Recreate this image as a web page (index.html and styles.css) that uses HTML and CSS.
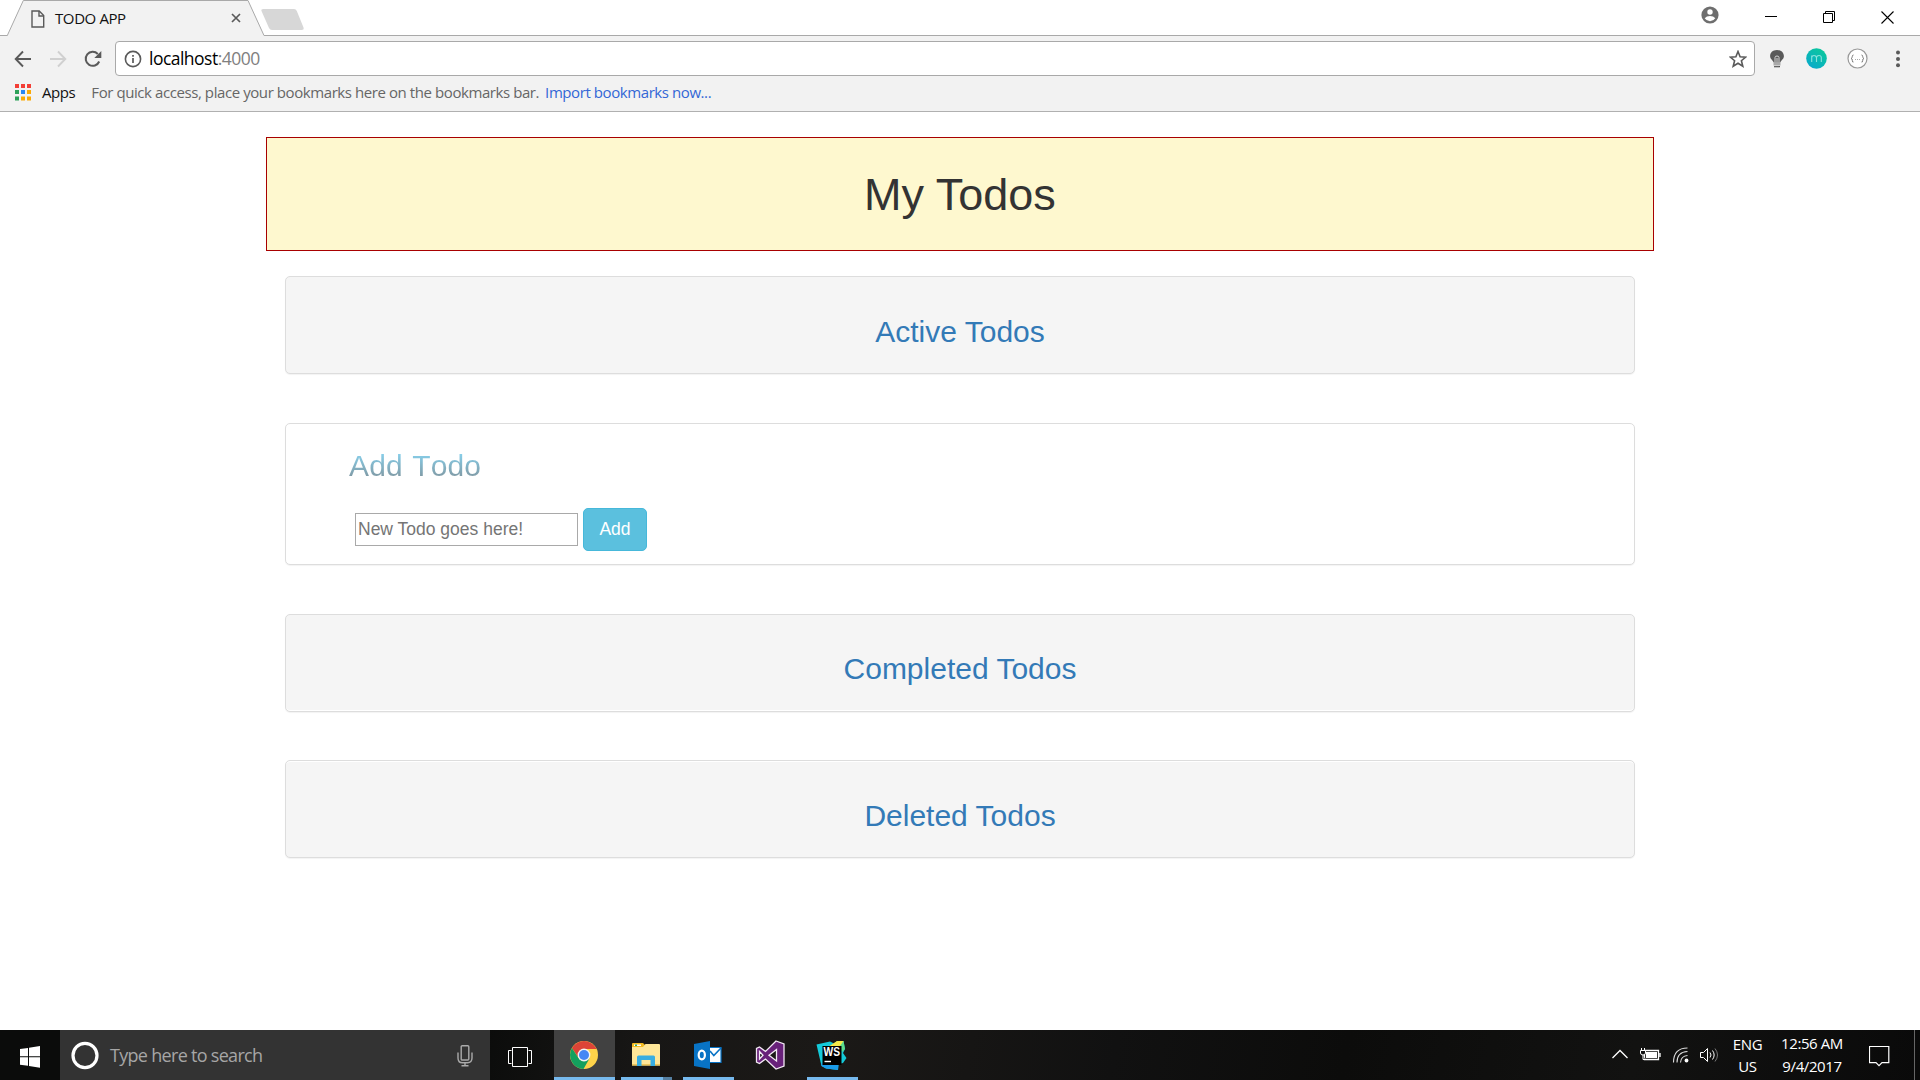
FILE: index.html
```html
<!DOCTYPE html>
<html lang="en">
<head>
<meta charset="utf-8">
<title>TODO APP</title>
<link rel="stylesheet" href="styles.css">
</head>
<body>
<header class="browser">
  <div class="titlebar">
    <div class="tab">
      <svg class="tab-shape" width="306" height="36" viewBox="0 0 306 36"><path d="M7 36L23.300 .5H248L264.500 36z" fill="#f2f2f2"/><path d="M0 35.500H7.300L23.300 .5H248L264 35.500H306" fill="none" stroke="#a9a9a9"/><path d="M263.500 9H294q2 0 2.800 2L303.500 27.500q.8 2.500-2 2.500H272q-2 0-3-2L261.500 11q-.8-2 2-2z" fill="#d7d7d7"/></svg>
      <svg class="tab-page" width="14" height="18" viewBox="0 0 14 18" fill="none" stroke="#5a5a5a" stroke-width="1.400"><path d="M1 1H8.200L12.700 5.600V17H1z"/><path d="M8 1V6H12.700"/></svg>
      <span class="tab-title">TODO APP</span>
      <svg class="tab-close" width="10" height="10" viewBox="0 0 10 10" stroke="#5a5a5a" stroke-width="1.700"><path d="M1 1L9 9M9 1L1 9"/></svg>
    </div>
    <div class="window-controls">
      <svg class="profile" width="18" height="18" viewBox="0 0 18 18"><circle cx="9" cy="9" r="8.600" fill="#6e6e6e"/><circle cx="9" cy="6" r="2.700" fill="#fff"/><path d="M3.700 12.300Q5.500 9.900 9 9.900T14.300 12.300Q12.500 15.200 9 15.200T3.700 12.300z" fill="#fff"/></svg>
      <svg width="12" height="12" viewBox="0 0 12 12" stroke="#000"><path d="M0 5.500H12"/></svg>
      <svg width="12" height="12" viewBox="0 0 12 12" fill="none" stroke="#000"><path d="M.5 2.500H9.500V11.500H.5zM2.500 2.500V.5H11.500V9.500H9.500"/></svg>
      <svg width="13" height="13" viewBox="0 0 13 13" stroke="#000" stroke-width="1.100"><path d="M.5 .5L12.500 12.500M12.500 .5L.5 12.500"/></svg>
    </div>
  </div>
  <div class="toolbar">
    <div class="nav">
      <svg width="18" height="18" viewBox="0 0 18 18" fill="none" stroke="#5a5a5a" stroke-width="1.900"><path d="M17 9H2M9 1.500L1.700 9L9 16.500"/></svg>
      <svg width="18" height="18" viewBox="0 0 18 18" fill="none" stroke="#d0d0d0" stroke-width="1.900"><path d="M1 9H16M9 1.500L16.300 9L9 16.500"/></svg>
      <svg width="18" height="18" viewBox="0 0 18 18"><path d="M15.200 11.500A7 7 0 1 1 13.800 4" fill="none" stroke="#5a5a5a" stroke-width="2"/><path d="M17.300 1V8H10.300z" fill="#5a5a5a"/></svg>
    </div>
    <div class="omnibox">
      <svg width="18" height="18" viewBox="0 0 18 18"><circle cx="9" cy="9" r="7.600" fill="none" stroke="#5a5a5a" stroke-width="1.600"/><path d="M9 8V13M9 5V6.800" stroke="#5a5a5a" stroke-width="1.700"/></svg>
      <span class="url">localhost<span class="port">:4000</span></span>
      <svg class="star" width="18" height="18" viewBox="0 0 18 18"><path d="M9 1.500L11.100 6.700L16.700 7.100L12.400 10.700L13.800 16.200L9 13.200L4.200 16.200L5.600 10.700L1.300 7.100L6.900 6.700z" fill="none" stroke="#5a5a5a" stroke-width="1.600"/></svg>
    </div>
    <div class="extensions">
      <svg width="16" height="20" viewBox="0 0 16 20"><path d="M8 1C3.500 1 1 4 1.100 7.300C1.200 10.500 4 11 4.500 13.500H11.500C12 11 14.800 10.500 14.900 7.300C15 4 12.500 1 8 1z" fill="#5a5a5a"/><path d="M6 13V8.500Q6 7 8 7T10 8.500V13M8 9V13" fill="none" stroke="#d8d8d8"/><path d="M4.500 14H11.500V16.500H4.500z" fill="#aaa"/><path d="M5 17.700H11" stroke="#555" stroke-width="1.200"/></svg>
      <svg class="ext-m" width="21" height="21" viewBox="0 0 21 21"><defs><linearGradient id="teal" x1="0" y1="1" x2=".7" y2="0"><stop offset="0" stop-color="#08a6d2"/><stop offset="1" stop-color="#0bc79d"/></linearGradient></defs><circle cx="10.500" cy="10.500" r="10.300" fill="url(#teal)"/><path d="M5.700 14V7.500M5.700 9.500Q6 7.500 8 7.500T10.500 9.500V14M10.500 9.500Q10.800 7.500 13 7.500T15.300 9.500V14" fill="none" stroke="#8ae4dc" stroke-width="1.100"/></svg>
      <svg width="21" height="21" viewBox="0 0 21 21"><circle cx="10.500" cy="10.500" r="9.500" fill="#fff" stroke="#999" stroke-width="1.200"/><path d="M6.500 7Q5.300 7 5.300 8.500T4.200 10.500Q5.300 10.500 5.300 12.500T6.500 14M14.500 7Q15.700 7 15.700 8.500T16.800 10.500Q15.700 10.500 15.700 12.500T14.500 14" fill="none" stroke="#777"/><path d="M8 11.500H13.500" stroke="#aaa" stroke-dasharray="1 1"/></svg>
      <svg class="menu" width="6" height="18" viewBox="0 0 6 18" fill="#5a5a5a"><circle cx="3" cy="2.500" r="2"/><circle cx="3" cy="9" r="2"/><circle cx="3" cy="15.200" r="2"/></svg>
    </div>
  </div>
  <div class="bookmarks">
    <svg width="17" height="17" viewBox="0 0 17 17"><path d="M0 0h4v4H0zM6 0h4v4H6zM12 0h4v4H12z" fill="#f33f36"/><path d="M0 6h4v4H0zM0 12.500h4v4H0z" fill="#2da159"/><path d="M6 6h4v4H6z" fill="#2986f2"/><path d="M12 6h4v4H12zM6 12.500h4v4H6zM12 12.500h4v4H12z" fill="#fba905"/></svg>
    <span class="apps">Apps</span>
    <span class="hint">For quick access, place your bookmarks here on the bookmarks bar.</span>
    <a class="import">Import bookmarks now...</a>
  </div>
</header>

<main class="page">
  <div class="page-header"><h1>My Todos</h1></div>
  <div class="panels">
    <section class="panel active"><h3>Active Todos</h3></section>
    <section class="panel add">
      <h3 class="fade">Add Todo</h3>
      <form class="add-form">
        <input class="field" type="text" placeholder="New Todo goes here!">
        <button class="add-btn" type="button">Add</button>
      </form>
    </section>
    <section class="panel completed"><h3>Completed Todos</h3></section>
    <section class="panel deleted"><h3>Deleted Todos</h3></section>
  </div>
</main>

<footer class="taskbar">
  <div class="start"><svg width="20" height="22" viewBox="0 0 20 22" fill="#fff"><path d="M0 3L8 1.900V10.300H0zM9 1.700L20 0V10.300H9zM0 11.300H8V19.800L0 18.700zM9 11.300H20V21.800L9 20z"/></svg></div>
  <div class="search">
    <svg width="28" height="30" viewBox="0 0 28 30"><ellipse cx="14" cy="14.500" rx="12" ry="12.200" fill="none" stroke="#fff" stroke-width="3.200"/></svg>
    <span class="search-text">Type here to search</span>
    <svg class="mic" width="16" height="22" viewBox="0 0 16 22" fill="none" stroke="#aaa" stroke-width="1.400"><rect x="4.200" y=".8" width="7.600" height="14.200" rx="1"/><path d="M1 7.500V13Q1 17.800 5.500 17.800H10.500Q15 17.800 15 13V7.500M8 18V21M4.500 20.800H11.500"/></svg>
  </div>
  <div class="taskview"><svg width="24" height="20" viewBox="0 0 24 20" fill="none" stroke="#fff"><path d="M4.500 .5H19.500V19.500H4.500zM3.500 3.500H.5V16.500H3.500M20.500 3.500H23.500V16.500H20.500"/></svg></div>
  <div class="app chrome"><svg width="28" height="28" viewBox="0 0 28 28"><circle cx="14" cy="14" r="14" fill="#fed34a"/><path d="M1.900 7A14 14 0 0 1 26.100 7L26.600 8H14L8 16z" fill="#dc4437"/><path d="M1.900 7A14 14 0 0 0 13.500 28L19.500 17.500L14 20L8.500 17z" fill="#14a05e"/><circle cx="14" cy="14" r="6.400" fill="#f3f3f3"/><circle cx="14" cy="14" r="5" fill="#4587f4"/></svg></div>
  <div class="app explorer"><svg width="28" height="24" viewBox="0 0 28 24"><path d="M0 1Q0 0 1 0H11L13 2V5H0z" fill="#f4bb21"/><path d="M2 1.500H9V3H2z" fill="#fff"/><path d="M3 1.500H5V3H3z" fill="#2ba86b"/><path d="M0 4H11L13.500 1H27Q28 1 28 2V22.500H0z" fill="#fee698"/><path d="M0 21H28V22.500H0z" fill="#edc65c"/><path d="M5 23V14Q5 12.500 6.500 12.500H21.500Q23 12.500 23 14V23H18.500V17H9.500V23z" fill="#38ade1"/></svg></div>
  <div class="app outlook"><svg width="28" height="28" viewBox="0 0 28 28"><path d="M14 6.500H27V21.500H14z" fill="#fff" stroke="#0873c5" stroke-width="1.200"/><path d="M16 10L19.800 14.500L27 7" fill="none" stroke="#0873c5" stroke-width="1.600"/><path d="M0 3L16 0V28L0 25z" fill="#0873c5"/><ellipse cx="7.800" cy="14" rx="3.100" ry="4.400" fill="none" stroke="#fff" stroke-width="2.200"/></svg></div>
  <div class="app vs"><svg width="30" height="30" viewBox="0 0 30 30"><path fill-rule="evenodd" d="M21 1L29 4V26L21 29L10.500 19L4.500 23.500L1.500 22V8.500L4.500 7L10.500 11.500zM4.500 11.500V19L8 15.200zM21.500 9.500L14 15.200L21.500 21z" fill="#68217a" stroke="#f3eaf5" stroke-width="1.300"/></svg></div>
  <div class="app ws"><svg width="31" height="31" viewBox="0 0 31 31"><path d="M.5 4.500L14 1.500L18 3.500L21 1H27.500L29 9L27 13L30.500 18L27 23L22.500 24L22 30L10 28.500L5.500 26z" fill="#14c9d9"/><path d="M13.500 6L21 1H27.500L26 6z" fill="#f5e94a"/><path d="M24 6L27.500 1L29 9L26 12z" fill="#5bdc8b"/><path d="M5.500 23H25L22.500 24L22 30L10 28.500L5.500 26z" fill="#1a9bea"/><path d="M6.500 6H25.500V25H6.500z" fill="#000"/><path d="M8.500 21.500H15" stroke="#fff" stroke-width="1.400"/><text x="7.500" y="16.300" font-family="Liberation Sans, sans-serif" font-weight="700" font-size="12" fill="#fff" textLength="16.500" lengthAdjust="spacingAndGlyphs">WS</text></svg></div>
  <div class="tray">
    <svg width="108" height="22" viewBox="0 0 108 22" fill="none" stroke="#fff"><path d="M.5 14L8 6.500L15.500 14" stroke-width="1.300"/><path d="M32.500 6.500H46.500V15.500H32.500zM48 9V13" stroke-width="1.300"/><path d="M34 8H45V14H34z" fill="#fff" stroke="none"/><path d="M28.500 6.500H33.500V9Q33.500 11 31 11T28.500 9zM29.500 4V6.500M32.500 4V6.500M31 11V15.500H33" fill="#111"/><path d="M61.500 18.500Q61.500 4 75.500 4M65 18.500Q65 8 75.500 7.500M68.500 18.500Q69 12 75.500 11.500" stroke-width="1.100" stroke="#ddd"/><circle cx="74.500" cy="16.500" r="1.900" fill="#fff" stroke="none"/><path d="M88.500 8.500H91.500L95.500 4.500V17.500L91.500 13.500H88.500z"/><path d="M98 8.500Q100 11 98 13.500M100.500 6.500Q103.800 11 100.500 15.500"/><path d="M103 4.500Q108 11 103 17.500" stroke="#777"/></svg>
    <div class="lang"><span>ENG</span><span>US</span></div>
    <div class="clock"><span>12:56 AM</span><span>9/4/2017</span></div>
    <svg class="action" width="21" height="21" viewBox="0 0 21 21" fill="none" stroke="#fff" stroke-width="1.200"><path d="M.5 .5H19.800V16.700H13L10 19.700L7 16.700H.5z"/></svg>
    <div class="peek"></div>
  </div>
</footer>
</body>
</html>
```
FILE: styles.css
```css
* { box-sizing: border-box; }
body {
  margin: 0;
  width: 1920px;
  height: 1080px;
  overflow: hidden;
  display: flex;
  flex-direction: column;
  background: #fff;
  font-family: "Liberation Sans", Arial, sans-serif;
}
svg { display: block; flex: none; }

/* browser chrome */
.browser {
  height: 112px;
  flex: none;
  background: #f2f2f2;
  border-bottom: 1px solid #b0b0b0;
  font-family: "Open Sans", "Noto Sans", sans-serif;
  font-size: 15px;
  letter-spacing: -.42px;
  white-space: nowrap;
}
.titlebar {
  height: 36px;
  display: flex;
  justify-content: space-between;
  background: #fff;
  box-shadow: inset 0 -1px #a9a9a9;
}
.tab {
  position: relative;
  width: 306px;
  height: 36px;
  display: flex;
  align-items: center;
  padding-left: 31px;
}
.tab-shape { position: absolute; left: 0; top: 0; }
.tab-page, .tab-title, .tab-close { position: relative; }
.tab-page { margin-top: 2px; }
.tab-title { margin-left: 10px; width: 176px; color: #111; line-height: 36px; letter-spacing: -.4px; }
.window-controls {
  display: flex;
  align-items: center;
  height: 34px;
  padding-right: 26px;
  gap: 46px;
}
.profile { margin-bottom: 4px; }
.toolbar { height: 44px; display: flex; align-items: center; padding: 1px 19px 0 14px; }
.nav { display: flex; gap: 17px; width: 101px; }
.omnibox {
  width: 1640px;
  height: 35px;
  display: flex;
  align-items: center;
  padding: 0 7px 0 8px;
  background: #fff;
  border: 1px solid #a9a9a9;
  border-radius: 4px;
}
.url { flex: 1; margin-left: 7px; font-size: 17.5px; line-height: 33px; letter-spacing: -.52px; color: #000; }
.port { color: #808080; }
.extensions { display: flex; align-items: center; flex: 1; padding-left: 14px; gap: 20px; }
.ext-m { margin-left: 1px; }
.menu { margin-left: 7px; }
.bookmarks { height: 24px; display: flex; align-items: center; padding-left: 15px; line-height: 24px; }
.bookmarks svg { margin-top: 1px; }
.apps { margin-left: 10px; color: #111; }
.hint { margin-left: 16px; color: #666; }
.import { margin-left: 6px; color: #3367d6; }

/* page */
.page { flex: 1; width: 1388px; margin: 0 auto; padding-top: 25px; }
.page-header {
  height: 114px;
  display: flex;
  align-items: center;
  justify-content: center;
  padding-top: 2px;
  background: #fef8cf;
  border: 1px solid #a80000;
}
h1, h3 { margin: 0; font-weight: 400; }
h1 { font-size: 45px; line-height: 50px; color: #333; }
h3 { font-size: 30px; line-height: 33px; }
.panels { padding: 25px 19px 0; }
.panel {
  height: 98px;
  padding-top: 38px;
  margin-bottom: 48px;
  border: 1px solid #ddd;
  border-radius: 5px;
  background: #f5f5f5;
  box-shadow: 0 1px 1px rgba(0, 0, 0, .05);
  text-align: center;
  color: #337ab7;
}
.panel.active { margin-bottom: 49px; }
.panel.add {
  height: 142px;
  padding: 25px 0 0 63px;
  margin-bottom: 49px;
  background: #fff;
  text-align: left;
}
.panel.completed { padding-top: 37px; box-shadow: inset 0 -1px #fff, 0 1px 1px rgba(0, 0, 0, .05); }
.panel.deleted { margin-bottom: 0; box-shadow: inset 0 1px #fff, 0 1px 1px rgba(0, 0, 0, .05); }
.fade {
  font-kerning: none;
  letter-spacing: .12px;
  word-spacing: 1px;
  background: linear-gradient(#87cee9 15%, #809aa5 85%);
  -webkit-background-clip: text;
  background-clip: text;
  color: transparent;
}
.add-form { display: flex; align-items: center; gap: 5px; margin: 26px 0 0 6px; }
.field {
  width: 223px;
  height: 33px;
  padding: 0 2px;
  margin: 0;
  border: 1px solid #a9a9a9;
  font: 17.5px "Liberation Sans", Arial, sans-serif;
}
.field::placeholder { color: #757575; }
.add-btn {
  width: 64px;
  height: 43px;
  padding: 0;
  border: 1px solid #46b8da;
  border-radius: 5px;
  background: #5bc0de;
  color: #fff;
  font: 17.5px "Liberation Sans", Arial, sans-serif;
}

/* taskbar */
.taskbar {
  height: 50px;
  flex: none;
  display: flex;
  align-items: center;
  background: linear-gradient(100deg, #0b0c0b 0 25%, #171615 33%, #1b1917 43%, #111 58%, #0c0c0b 70%, #121211 85%, #0a0a0a);
  font-family: "Open Sans", "Noto Sans", sans-serif;
  white-space: nowrap;
}
.start { width: 60px; padding: 4px 0 0 20px; }
.search {
  width: 430px;
  height: 50px;
  display: flex;
  align-items: center;
  padding: 2px 17px 0 11px;
  background: #333;
}
.search-text { flex: 1; margin: 0 0 2px 11px; font-size: 18px; letter-spacing: -.7px; color: #a6a6a6; }
.mic { margin-left: -1px; }
.taskview { width: 64px; padding: 4px 0 0 18px; }
.app {
  width: 51px;
  height: 50px;
  margin-right: 11px;
  display: flex;
  align-items: center;
  justify-content: center;
  border-bottom: 3px solid #76b9ed;
  padding: 3px 2px 0 0;
}
.chrome { width: 61px; margin-right: 6px; background: #414141; }
.explorer { border-image: linear-gradient(90deg, #76b9ed 40px, #557fa1 40px) 3; padding-right: 1px; }
.vs { border-bottom-color: transparent; }
.tray {
  display: flex;
  align-items: center;
  flex: 1;
  justify-content: flex-end;
  height: 50px;
  color: #fff;
  font-size: 15px;
  letter-spacing: -.4px;
}
.lang, .clock { display: flex; flex-direction: column; align-items: center; line-height: 22.5px; }
.lang { width: 31px; margin-left: 12px; }
.clock { width: 64px; margin-left: 17px; line-height: 23px; }
.action { margin: 2px 24px 0 25px; }
.peek { width: 6px; height: 50px; border-left: 1px solid #666; }
```
